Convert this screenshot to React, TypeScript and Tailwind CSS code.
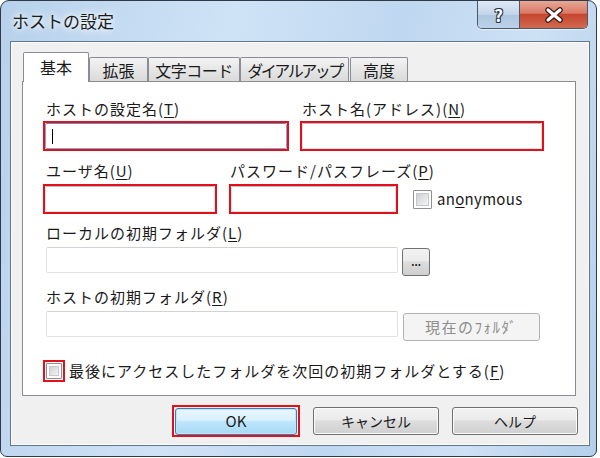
import type { ReactNode } from "react";

const FONT = "font-['Noto_Sans_CJK_JP','Noto_Sans',sans-serif]";

function Acc({ text, k }: { text: string; k: string }) {
  return (
    <span>
      {text}(<span className="underline underline-offset-2">{k}</span>)
    </span>
  );
}

function Label({ children, pad = "pl-[3px]" }: { children: ReactNode; pad?: string }) {
  return <div className={`h-[20px] leading-[20px] text-[15px] tracking-[1px] text-[#1a1a1a] whitespace-nowrap ${pad}`}>{children}</div>;
}

/** red highlight box around a text box */
function RedField({ w, caret = false }: { w: string; caret?: boolean }) {
  return (
    <div className={`h-[30px] ${w} border-2 border-[#e3101c]`}>
      <div
        className={`flex h-full items-center rounded-[2px] border bg-white pl-[6px] ${
          caret ? "border-[#7fa9d3] border-t-[#5f8fbf]" : "border-[#dde3ea] border-t-[#b9bec6]"
        }`}
      >
        {caret && <div className="h-[15px] w-px bg-black" />}
      </div>
    </div>
  );
}

function Box({ size = "w-[17px] h-[17px]" }: { size?: string }) {
  return (
    <div className={`${size} rounded-[1px] border border-[#8e8f8f] bg-white p-[2px]`}>
      <div className="h-full w-full border border-[#c5c8cc] bg-[linear-gradient(135deg,#cfd1d4,#f4f4f4)]" />
    </div>
  );
}

function Tab({ label, w, track = "tracking-normal", active = false }: { label: string; w: string; track?: string; active?: boolean }) {
  if (active)
    return (
      <div
        className={`relative z-10 -mb-px flex h-[30px] ${w} items-center justify-center whitespace-nowrap rounded-t-[2px] border border-b-0 border-[#898c95] bg-white pb-[2px] text-[16px] ${track}`}
      >
        {label}
      </div>
    );
  return (
    <div
      className={`flex h-[24px] ${w} items-center justify-center whitespace-nowrap rounded-t-[2px] border border-b-0 border-[#898c95] bg-[linear-gradient(180deg,#f3f3f3,#e6e6e6_50%,#dadada)] text-[16px] ${track}`}
    >
      {label}
    </div>
  );
}

function Button({ children, w = "w-[126px]" }: { children: ReactNode; w?: string }) {
  return (
    <div
      className={`flex h-[28px] ${w} items-center justify-center rounded-[3px] border border-[#707070] bg-[linear-gradient(180deg,#f2f2f2,#ebebeb_45%,#dddddd_50%,#cfcfcf)] text-[14px] shadow-[inset_0_0_0_1px_#fbfbfb]`}
    >
      {children}
    </div>
  );
}

export default function App() {
  return (
    <div className={`h-[458px] w-[600px] bg-white ${FONT} text-[#1a1a1a]`}>
      <div className="flex h-[457px] w-[597px] flex-col rounded-t-[9px] rounded-b-[7px] border border-[#303a47] bg-[linear-gradient(100deg,#b7d1ec_0%,#cfe3f6_35%,#bfd7f0_60%,#cde1f5_80%,#b5cfea_100%)]">
        {/* Title bar */}
        <div className="flex h-[40px] items-start justify-between">
          <div className="pl-[11px] pt-[8px] text-[17px] leading-[24px] text-[#1b1b1b] [text-shadow:0_0_6px_#ffffff,0_0_10px_#ffffff]">
            ホストの設定
          </div>
          <div className="mr-[8px] flex h-[28px] overflow-hidden rounded-b-[5px] border border-t-0 border-[#4a5868] shadow-[0_1px_0_#e6eef8]">
            <div className="flex w-[42px] items-center justify-center border-r border-[#4a5868] bg-[linear-gradient(180deg,#dfe9f5,#c3d5ea_50%,#aec5df_51%,#bcd2ea)] text-[17px] font-bold text-white [text-shadow:0_0_1px_#2b3a4c,1px_1px_0_#2b3a4c,-1px_-1px_0_#2b3a4c,1px_-1px_0_#2b3a4c,-1px_1px_0_#2b3a4c]">
              ?
            </div>
            <div className="flex w-[67px] items-center justify-center bg-[linear-gradient(180deg,#e8a797,#d97a66_45%,#c8452f_50%,#d06a52)]">
              <svg width="22" height="16" viewBox="0 0 22 16">
                <path d="M5 3 L17 13 M17 3 L5 13" stroke="#3a1a14" strokeWidth="5.6" strokeLinecap="round" />
                <path d="M5 3 L17 13 M17 3 L5 13" stroke="#ffffff" strokeWidth="3.2" strokeLinecap="round" />
              </svg>
            </div>
          </div>
        </div>

        {/* Client area */}
        <div className="ml-[9px] h-[405px] w-[580px] border border-[#62758a] bg-[#f0f0f0] shadow-[inset_0_0_0_1px_#fbfcfd]">
          <div className="ml-[11px] mt-[10px]">
            {/* Tabs */}
            <div className="flex h-[29px] items-end pl-[1px]">
              <Tab label="基本" w="w-[66px]" active />
              <Tab label="拡張" w="w-[59px]" />
              <Tab label="文字コード" w="w-[92px]" track="tracking-[-0.5px]" />
              <Tab label="ダイアルアップ" w="w-[109px]" track="tracking-[-2.5px]" />
              <div className="w-px" />
              <Tab label="高度" w="w-[58px]" />
            </div>

            {/* Panel */}
            <div className="h-[315px] w-[554px] border border-[#898c95] bg-white pl-[20px] pt-[17px]">
              <div className="flex gap-[11px]">
                <div className="w-[246px]">
                  <Label>
                    <Acc text="ホストの設定名" k="T" />
                  </Label>
                  <div className="mt-[2px]">
                    <RedField w="w-[246px]" caret />
                  </div>
                </div>
                <div className="w-[244px]">
                  <Label pad="pl-[2px]">
                    <Acc text="ホスト名(アドレス)" k="N" />
                  </Label>
                  <div className="mt-[2px]">
                    <RedField w="w-[244px]" />
                  </div>
                </div>
              </div>

              <div className="mt-[10px] flex">
                <div className="w-[174px]">
                  <Label>
                    <Acc text="ユーザ名" k="U" />
                  </Label>
                  <div className="mt-[3px]">
                    <RedField w="w-[174px]" />
                  </div>
                </div>
                <div className="ml-[12px] w-[169px]">
                  <Label pad="pl-px">
                    <Acc text="パスワード/パスフレーズ" k="P" />
                  </Label>
                  <div className="mt-[3px]">
                    <RedField w="w-[169px]" />
                  </div>
                </div>
                <div className="ml-[15px] mt-[23px] flex h-[30px] items-center">
                  <Box size="w-[19px] h-[19px]" />
                  <span className="ml-[5px] text-[15px] tracking-[0.3px]">
                    an<span className="underline underline-offset-2">o</span>nymous
                  </span>
                </div>
              </div>

              <div className="mt-[9px]">
                <Label>
                  <Acc text="ローカルの初期フォルダ" k="L" />
                </Label>
                <div className="mt-[4px] flex items-start">
                  <div className="ml-[3px] h-[26px] w-[352px] rounded-[2px] border border-[#dfe3e8] border-t-[#cfd3d8] bg-white" />
                  <div className="ml-[4px] mt-[1px] flex h-[28px] w-[28px] items-end justify-center rounded-[3px] border border-[#707070] bg-[linear-gradient(180deg,#f2f2f2,#ebebeb_45%,#dddddd_50%,#cfcfcf)] pb-[8px] text-[10px] leading-[10px] font-bold">
                    ...
                  </div>
                </div>
              </div>

              <div className="mt-[11px]">
                <Label>
                  <Acc text="ホストの初期フォルダ" k="R" />
                </Label>
                <div className="mt-[4px] flex items-start">
                  <div className="ml-[3px] h-[26px] w-[352px] rounded-[2px] border border-[#dfe3e8] border-t-[#cfd3d8] bg-white" />
                  <div className="ml-[5px] mt-[2px] flex h-[28px] w-[137px] items-center justify-center rounded-[3px] border border-[#adb2b5] bg-[#f4f4f4] text-[15px] tracking-[1.5px] text-[#8d8d8d]">
                    現在のﾌｫﾙﾀﾞ
                  </div>
                </div>
              </div>

              <div className="mt-[19px] flex items-center">
                <div className="flex h-[22px] w-[22px] items-center justify-center border-2 border-[#e3101c]">
                  <Box size="w-[16px] h-[16px]" />
                </div>
                <div className="ml-[4px] text-[15px] tracking-[1px]">
                  <Acc text="最後にアクセスしたフォルダを次回の初期フォルダとする" k="F" />
                </div>
              </div>
            </div>

            {/* Buttons */}
            <div className="mt-[9px] flex items-center">
              <div className="ml-[150px] flex h-[32px] w-[128px] items-center justify-center border-2 border-[#e3101c]">
                <div className="flex h-[27px] w-[122px] items-center justify-center rounded-[3px] border border-[#3c7fb1] bg-[linear-gradient(180deg,#eaf6fd,#d9f0fc_45%,#bee6fd_50%,#a7d9f5)] text-[15px] shadow-[inset_0_0_0_1px_#c0e4f7]">
                  OK
                </div>
              </div>
              <div className="ml-[13px]">
                <Button>キャンセル</Button>
              </div>
              <div className="ml-[13px]">
                <Button>ヘルプ</Button>
              </div>
            </div>
          </div>
        </div>
      </div>
    </div>
  );
}
